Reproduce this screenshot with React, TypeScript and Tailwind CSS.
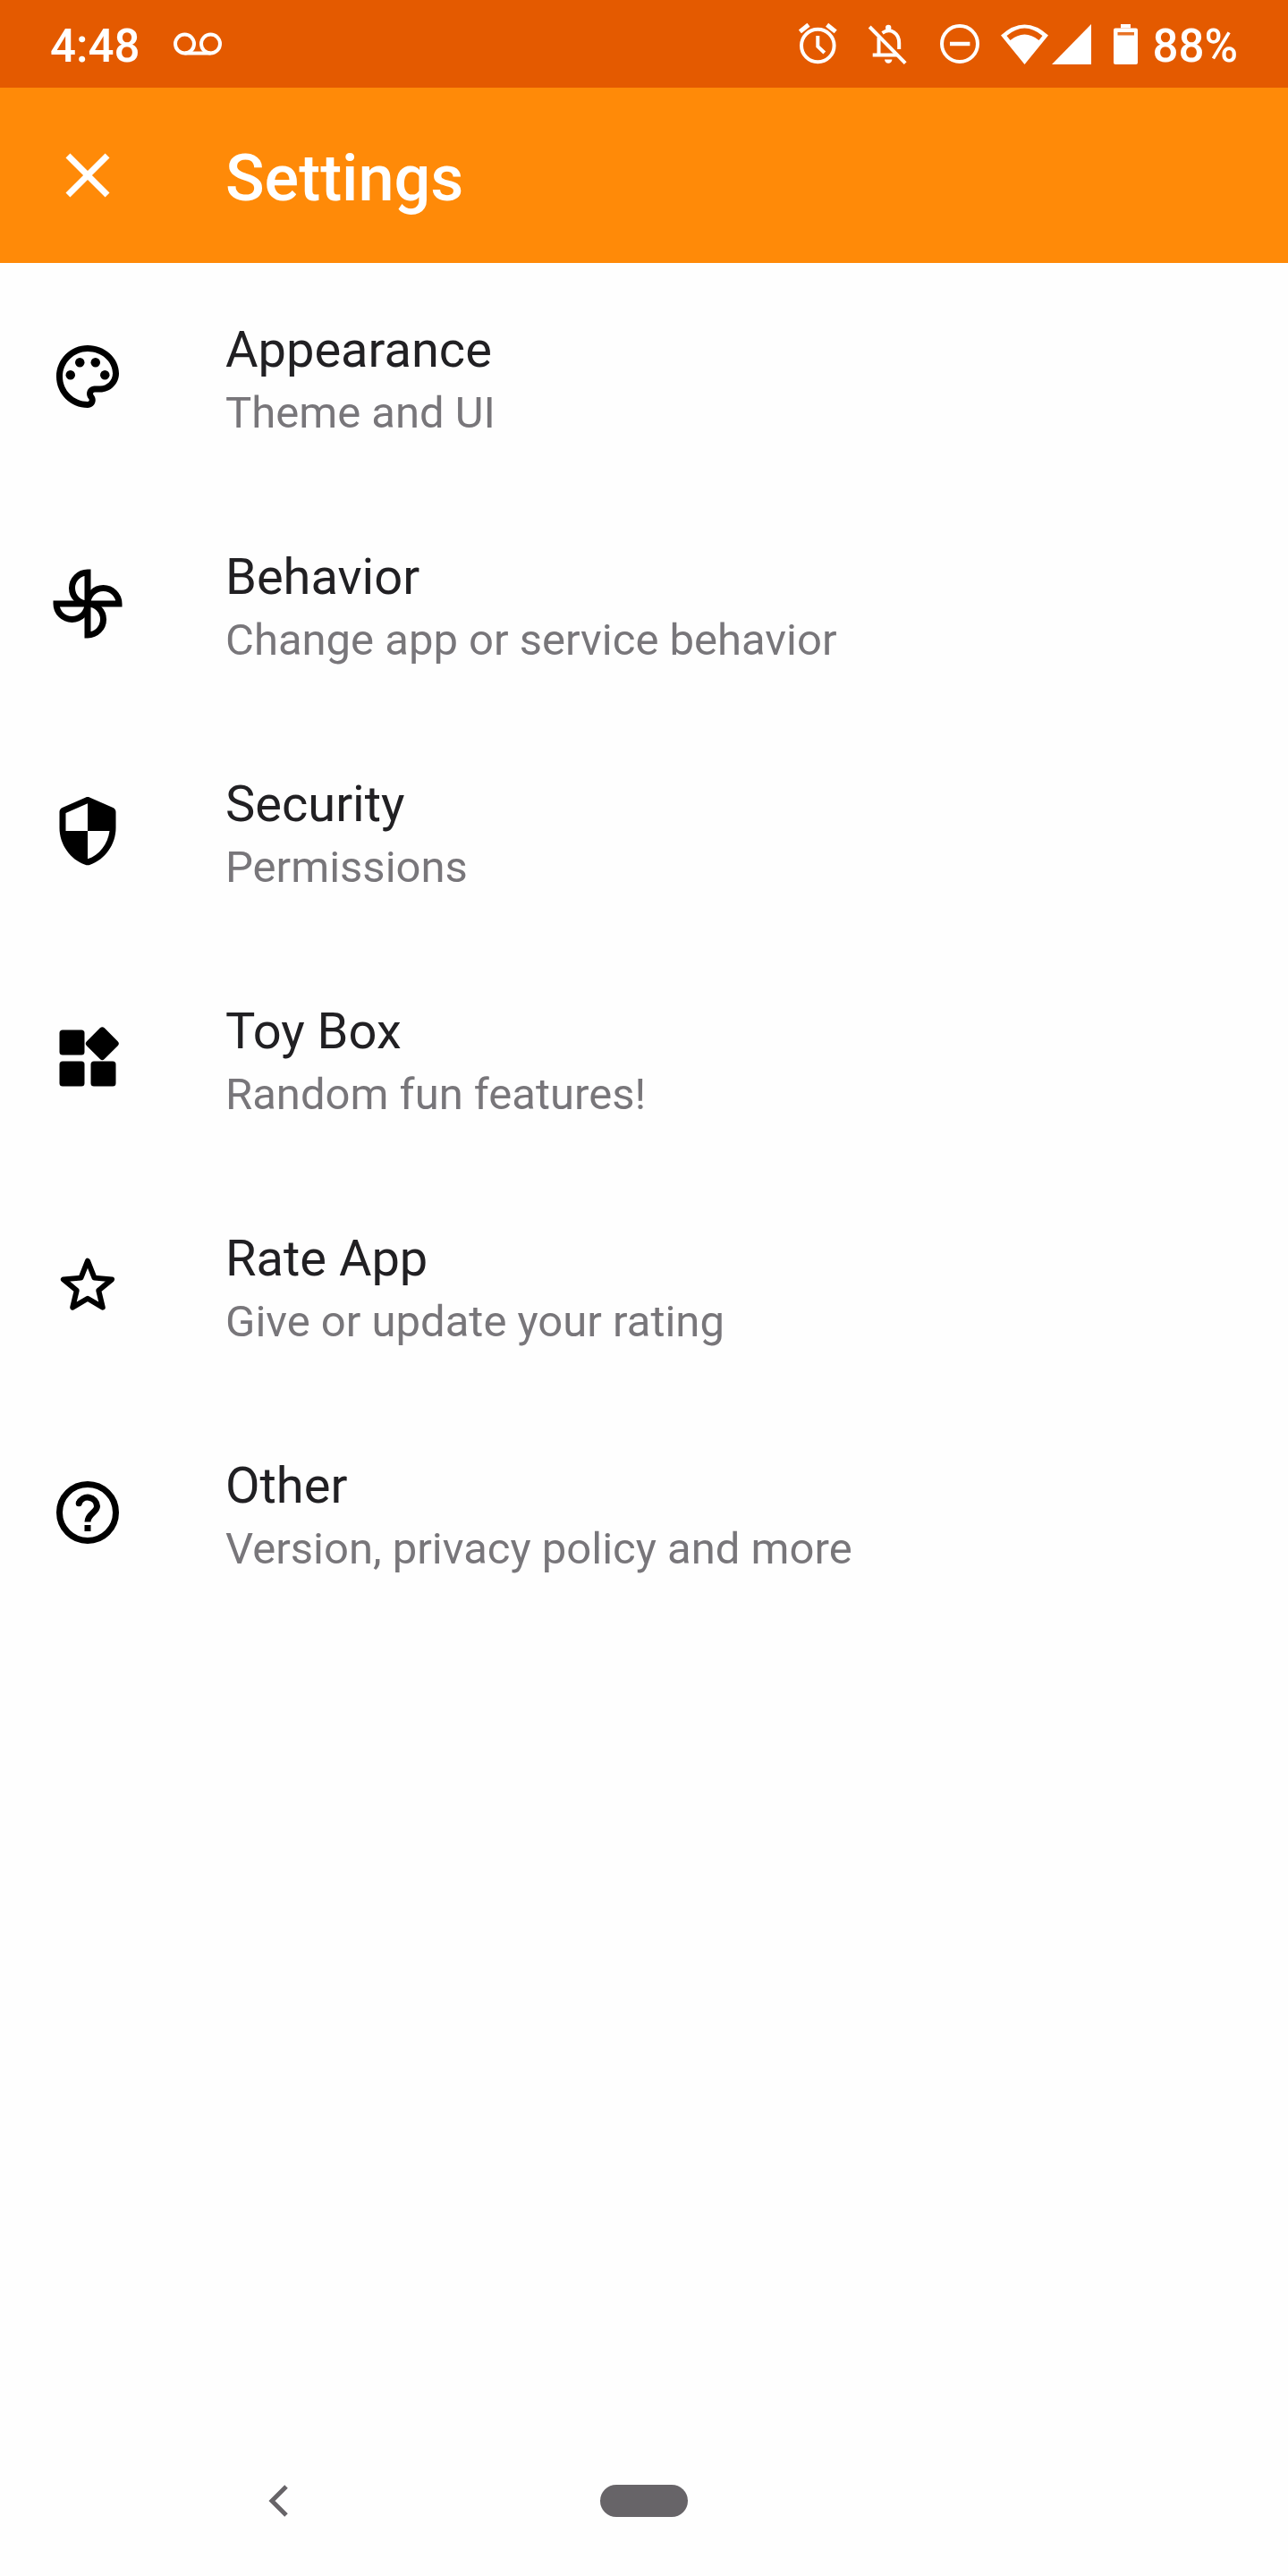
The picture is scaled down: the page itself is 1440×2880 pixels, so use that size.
import React from 'react';

type IconProps = { className?: string };

const PaletteIcon = ({ className }: IconProps) => (
  <svg viewBox="0 0 24 24" className={className} fill="currentColor" aria-hidden="true">
    <path d="M12 22C6.49 22 2 17.51 2 12S6.49 2 12 2s10 4.04 10 9c0 3.31-2.69 6-6 6h-1.77c-.28 0-.5.22-.5.5 0 .12.05.23.13.33.41.47.64 1.06.64 1.67 0 1.38-1.12 2.5-2.5 2.5zm0-18c-4.41 0-8 3.59-8 8s3.59 8 8 8c.28 0 .5-.22.5-.5 0-.16-.08-.28-.14-.35-.41-.46-.63-1.05-.63-1.65 0-1.38 1.12-2.5 2.5-2.5H16c2.21 0 4-1.79 4-4 0-3.86-3.59-7-8-7z" />
    <circle cx="6.5" cy="11.5" r="1.5" />
    <circle cx="9.5" cy="7.5" r="1.5" />
    <circle cx="14.5" cy="7.5" r="1.5" />
    <circle cx="17.5" cy="11.5" r="1.5" />
  </svg>
);

const FanIcon = ({ className }: IconProps) => (
  <svg viewBox="0 0 24 24" className={className} fill="none" stroke="currentColor" strokeWidth="2" aria-hidden="true">
    <path d="M22 12A5 5 0 0 0 12 12Z" />
    <path d="M12 22A5 5 0 0 0 12 12Z" />
    <path d="M2 12A5 5 0 0 0 12 12Z" />
    <path d="M12 2A5 5 0 0 0 12 12Z" />
  </svg>
);

const ShieldIcon = ({ className }: IconProps) => (
  <svg viewBox="0 0 24 24" className={className} fill="currentColor" aria-hidden="true">
    <path
      fillRule="evenodd"
      d="M12.6 1.25l7.5 3.35c.55.25.9.75.9 1.35V11c0 5.3-3.4 10.1-8.2 11.8-.5.2-1.1.2-1.6 0C6.4 21.1 3 16.3 3 11V5.95c0-.6.35-1.1.9-1.35l7.5-3.35c.4-.17.8-.17 1.2 0zM12 12h7c-.53 4.12-3.28 7.79-7 8.94V12H5V6.3l7-3.11z"
    />
  </svg>
);

const WidgetsIcon = ({ className }: IconProps) => (
  <svg viewBox="0 0 24 24" className={className} fill="currentColor" aria-hidden="true">
    <rect x="3" y="3" width="8" height="8" rx="1" />
    <rect x="3" y="13" width="8" height="8" rx="1" />
    <rect x="13" y="13" width="8" height="8" rx="1" />
    <rect x="12.66" y="3.34" width="8" height="8" rx="1" transform="rotate(45 16.66 7.34)" />
  </svg>
);

const StarIcon = ({ className }: IconProps) => (
  <svg viewBox="0 0 24 24" className={className} fill="none" stroke="currentColor" strokeWidth="1.7" strokeLinejoin="round" aria-hidden="true">
    <path d="M12 4.2L14.15 9.6 19.75 10.1 15.5 13.65 16.8 19.05 12 16.2 7.2 19.05 8.5 13.65 4.25 10.1 9.85 9.6z" />
  </svg>
);

const HelpIcon = ({ className }: IconProps) => (
  <svg viewBox="0 0 24 24" className={className} fill="none" stroke="currentColor" strokeWidth="2" aria-hidden="true">
    <circle cx="12" cy="12" r="9" />
    <path d="M9.2 9.1A3 3 0 0 1 15 10c0 2-3 2.3-3 5" />
    <circle cx="9.2" cy="9.1" r="1" fill="currentColor" stroke="none" />
    <path d="M12 16v2" />
  </svg>
);

const items = [
  { title: 'Appearance', summary: 'Theme and UI', icon: PaletteIcon },
  { title: 'Behavior', summary: 'Change app or service behavior', icon: FanIcon },
  { title: 'Security', summary: 'Permissions', icon: ShieldIcon },
  { title: 'Toy Box', summary: 'Random fun features!', icon: WidgetsIcon },
  { title: 'Rate App', summary: 'Give or update your rating', icon: StarIcon },
  { title: 'Other', summary: 'Version, privacy policy and more', icon: HelpIcon },
];

function StatusBar() {
  return (
    <div className="flex h-[98px] items-center justify-between bg-[#e45a00] px-14 text-[51px] leading-none font-medium text-white">
      <div className="flex items-center gap-[38px]">
        <span className="pt-1">4:48</span>
        <svg viewBox="0 0 54 26" className="h-[26px] w-[54px]" fill="none" stroke="currentColor" strokeWidth="4" aria-hidden="true">
          <circle cx="12.5" cy="13" r="10.5" />
          <circle cx="41.5" cy="13" r="10.5" />
          <path d="M12.5 23.5h29" />
        </svg>
      </div>
      <div className="flex items-center">
        <div className="mr-5 flex gap-[25px]">
          {/* alarm */}
          <svg viewBox="0 0 54 54" className="h-[54px] w-[54px]" fill="none" stroke="currentColor" strokeWidth="4" aria-hidden="true">
            <circle cx="27.3" cy="29" r="18.3" />
            <path d="M27.3 18v12l7.5 7" />
            <path d="M7.4 13.4l9.6-7.6M47.2 13.4l-9.6-7.6" strokeWidth="5" />
          </svg>
          {/* ringer off */}
          <svg viewBox="1 0 54 54" className="h-[54px] w-[54px]" fill="none" stroke="currentColor" strokeWidth="4" aria-hidden="true">
            <path d="M7.2 8L47.2 48.6" />
            <path d="M10.7 39.5h27M17.5 39.5V20M21.5 14.8C31 8.5 40.2 15.5 40.2 26v7" />
            <circle cx="28.2" cy="9" r="3.2" fill="currentColor" stroke="none" />
            <path d="M24 44.5h8.4a4.2 4.2 0 0 1-8.4 0z" fill="currentColor" stroke="none" />
          </svg>
          {/* do not disturb */}
          <svg viewBox="0 0 54 54" className="h-[54px] w-[54px]" fill="none" stroke="currentColor" strokeWidth="4" aria-hidden="true">
            <circle cx="28" cy="27" r="20" />
            <path d="M17 27h22.4" strokeWidth="4.5" />
          </svg>
        </div>
        <svg viewBox="0 0 53 45" className="mr-1 h-[45px] w-[53px]" fill="currentColor" fillRule="evenodd" aria-hidden="true">
          <path d="M26.5 45L0 12.5Q26.5-11.5 53 12.5zM6.5 13l4 5Q26.5 5 42.5 18l4-5Q26.5-4 6.5 13z" />
        </svg>
        <svg viewBox="0 0 44 45" className="mr-[25px] h-[45px] w-[44px]" fill="currentColor" aria-hidden="true">
          <path d="M0 45L44 0v45z" />
        </svg>
        <svg viewBox="0 0 27 45" className="mr-4 h-[45px] w-[27px]" fill="currentColor" aria-hidden="true">
          <path d="M8 0h11v4.5H8z" />
          <rect y="4.5" width="27" height="40.5" rx="2" />
          <path d="M4.5 9h18.5v3.5H4.5z" fill="#e45a00" fillOpacity="0.85" />
        </svg>
        <span className="pt-1">88%</span>
      </div>
    </div>
  );
}

export default function App() {
  return (
    <div className="flex min-h-screen flex-col bg-[#fefefe] font-['Roboto',sans-serif]">
      <StatusBar />

      <header className="flex h-[196px] items-center gap-28 bg-[#ff8a08] px-14 text-white">
        <button type="button" aria-label="Close" className="h-[84px] w-[84px]">
          <svg viewBox="0 0 24 24" fill="currentColor" aria-hidden="true">
            <path d="M19 6.41L17.59 5 12 10.59 6.41 5 5 6.41 10.59 12 5 17.59 6.41 19 12 13.41 17.59 19 19 17.59 13.41 12z" />
          </svg>
        </button>
        <h1 className="pt-2 text-[72px] leading-[84px] font-medium">Settings</h1>
      </header>

      <main className="flex-1">
        <ul>
          {items.map(({ title, summary, icon: Icon }) => (
            <li key={title}>
              <a href="#" className="flex h-[254px] items-center gap-28 px-14">
                <Icon className="h-[84px] w-[84px] shrink-0 text-black" />
                <span className="flex flex-col">
                  <span className="text-[56px] leading-[82px] text-[#212023]">{title}</span>
                  <span className="text-[49px] leading-[60px] text-[#78767a]">{summary}</span>
                </span>
              </a>
            </li>
          ))}
        </ul>
      </main>

      <nav className="grid h-[168px] grid-cols-3 items-center justify-items-center px-[106px] text-[#676468]">
        <button type="button" aria-label="Back">
          <svg viewBox="0 0 22 36" className="h-9 w-[22px]" fill="none" stroke="currentColor" strokeWidth="5" aria-hidden="true">
            <path d="M20 2L4 18l16 16" />
          </svg>
        </button>
        <button type="button" aria-label="Home" className="h-9 w-[98px] rounded-full bg-[#676468]" />
      </nav>
    </div>
  );
}
